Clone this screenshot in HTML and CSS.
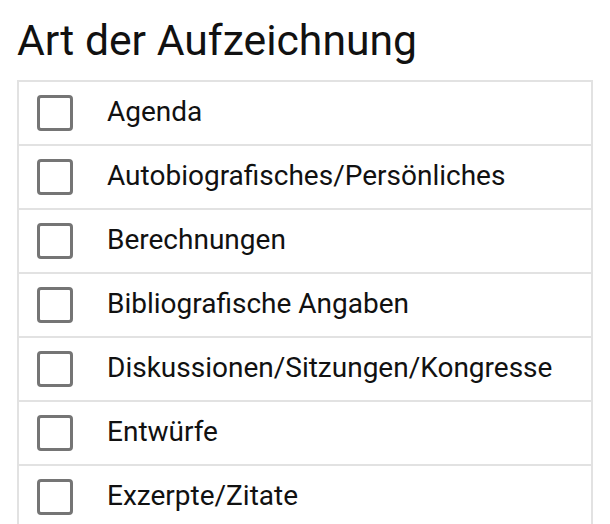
FILE: index.html
```html
<!DOCTYPE html>
<html lang="de">
<head>
<meta charset="utf-8">
<link rel="stylesheet" href="styles.css">
</head>
<body>
<h1 class="title">Art der Aufzeichnung</h1>
<ul class="list">
  <li class="row"><span class="box"></span><span class="label">Agenda</span></li>
  <li class="row"><span class="box"></span><span class="label">Autobiografisches/Persönliches</span></li>
  <li class="row"><span class="box"></span><span class="label">Berechnungen</span></li>
  <li class="row"><span class="box"></span><span class="label">Bibliografische Angaben</span></li>
  <li class="row"><span class="box"></span><span class="label">Diskussionen/Sitzungen/Kongresse</span></li>
  <li class="row"><span class="box"></span><span class="label">Entwürfe</span></li>
  <li class="row"><span class="box"></span><span class="label">Exzerpte/Zitate</span></li>
</ul>
</body>
</html>
```
FILE: styles.css
```css
html, body {
  margin: 0;
  padding: 0;
  background: #fff;
}
body {
  font-family: Roboto, "Liberation Sans", sans-serif;
  color: #111;
  overflow: hidden;
}
.title {
  margin: 0;
  padding: 14px 0 0 17px;
  height: 66px;
  box-sizing: border-box;
  font-size: 42.7px;
  font-weight: 400;
  line-height: 52px;
}
.list {
  list-style: none;
  margin: 14px 17px 0 17px;
  padding: 0;
  width: 576px;
  box-sizing: border-box;
  border: 2px solid #e2e2e2;
  border-bottom: none;
}
.row {
  display: flex;
  align-items: center;
  height: 64px;
  box-sizing: border-box;
  border-bottom: 2px solid #e2e2e2;
  padding-left: 18px;
}
.box {
  width: 36px;
  height: 36px;
  box-sizing: border-box;
  border: 3.5px solid #757575;
  border-radius: 4px;
  flex: none;
  margin-right: 34px;
}
.label {
  font-size: 28px;
  line-height: 32px;
  margin-bottom: 2px;
}
```
